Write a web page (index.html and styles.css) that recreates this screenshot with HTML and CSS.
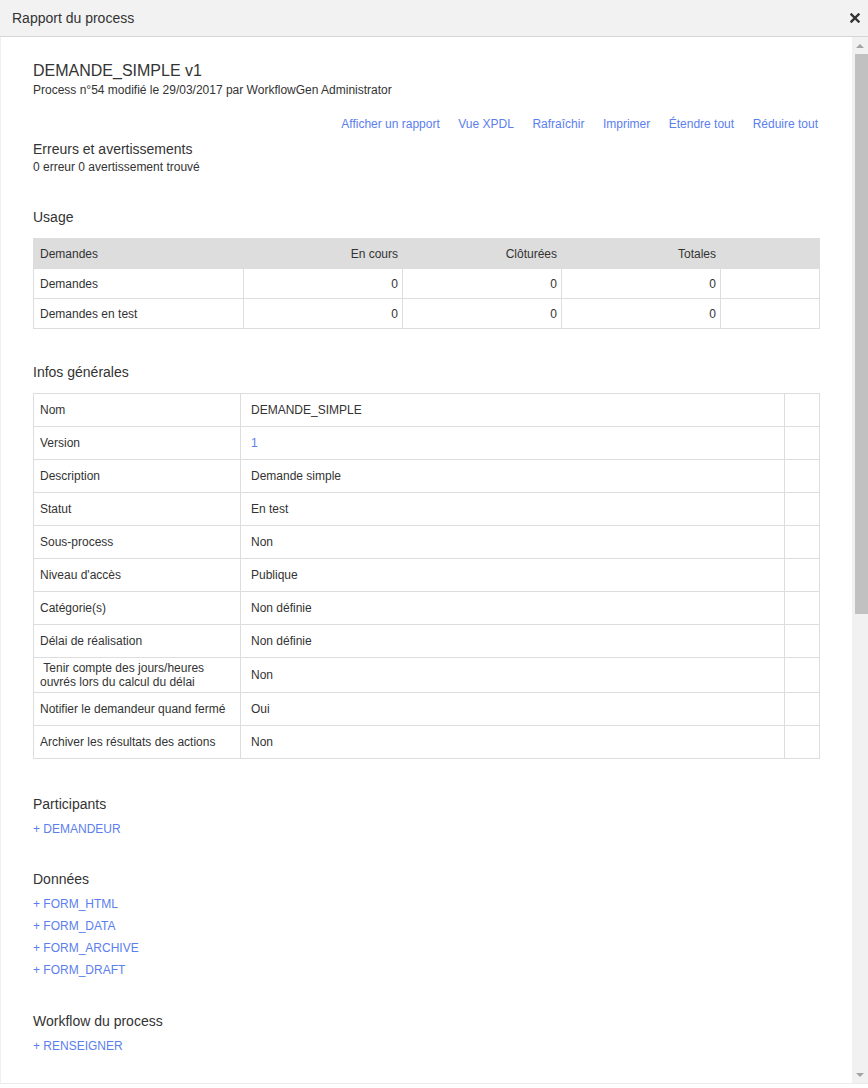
FILE: index.html
```html
<!DOCTYPE html>
<html>
<head>
    <title>Rapport du process</title>
    <link rel="stylesheet" href="styles.css">
</head>
<body>
    <div class="dialog">
        <div class="dialog-header">
            <span class="dialog-title">Rapport du process</span>
            <span class="close">
                <svg width="10" height="10" viewBox="0 0 10 10"><path d="M1.5 1.5 L8.5 8.5 M8.5 1.5 L1.5 8.5" stroke="#333" stroke-width="2.4" stroke-linecap="square"/></svg>
            </span>
        </div>

        <div class="dialog-body">
            <div class="report">
                <h1>DEMANDE_SIMPLE v1</h1>
                <p class="subtitle">Process n°54 modifié le 29/03/2017 par WorkflowGen Administrator</p>

                <div class="actions">
                    <a href="#">Afficher un rapport</a>
                    <a href="#">Vue XPDL</a>
                    <a href="#">Rafraîchir</a>
                    <a href="#">Imprimer</a>
                    <a href="#">Étendre tout</a>
                    <a href="#">Réduire tout</a>
                </div>

                <h2 class="first">Erreurs et avertissements</h2>
                <p class="note">0 erreur 0 avertissement trouvé</p>

                <h2 class="usage-title">Usage</h2>
                <table class="usage">
                    <tr>
                        <th class="c-label">Demandes</th>
                        <th class="num">En cours</th>
                        <th class="num">Clôturées</th>
                        <th class="num">Totales</th>
                        <th class="c-end"></th>
                    </tr>
                    <tr>
                        <td>Demandes</td>
                        <td class="num">0</td>
                        <td class="num">0</td>
                        <td class="num">0</td>
                        <td></td>
                    </tr>
                    <tr>
                        <td>Demandes en test</td>
                        <td class="num">0</td>
                        <td class="num">0</td>
                        <td class="num">0</td>
                        <td></td>
                    </tr>
                </table>

                <h2 class="section">Infos générales</h2>
                <table class="infos">
                    <tr><td class="k">Nom</td><td class="v">DEMANDE_SIMPLE</td><td class="e"></td></tr>
                    <tr><td class="k">Version</td><td class="v"><a href="#">1</a></td><td class="e"></td></tr>
                    <tr><td class="k">Description</td><td class="v">Demande simple</td><td class="e"></td></tr>
                    <tr><td class="k">Statut</td><td class="v">En test</td><td class="e"></td></tr>
                    <tr><td class="k">Sous-process</td><td class="v">Non</td><td class="e"></td></tr>
                    <tr><td class="k">Niveau d'accès</td><td class="v">Publique</td><td class="e"></td></tr>
                    <tr><td class="k">Catégorie(s)</td><td class="v">Non définie</td><td class="e"></td></tr>
                    <tr><td class="k">Délai de réalisation</td><td class="v">Non définie</td><td class="e"></td></tr>
                    <tr><td class="k">&nbsp;Tenir compte des jours/heures<br>ouvrés lors du calcul du délai</td><td class="v">Non</td><td class="e"></td></tr>
                    <tr><td class="k">Notifier le demandeur quand fermé</td><td class="v">Oui</td><td class="e"></td></tr>
                    <tr><td class="k">Archiver les résultats des actions</td><td class="v">Non</td><td class="e"></td></tr>
                </table>

                <h2 class="section participants-title">Participants</h2>
                <ul class="items">
                    <li><a href="#">+ DEMANDEUR</a></li>
                </ul>

                <h2 class="section data-title">Données</h2>
                <ul class="items">
                    <li><a href="#">+ FORM_HTML</a></li>
                    <li><a href="#">+ FORM_DATA</a></li>
                    <li><a href="#">+ FORM_ARCHIVE</a></li>
                    <li><a href="#">+ FORM_DRAFT</a></li>
                </ul>

                <h2 class="section workflow-title">Workflow du process</h2>
                <ul class="items">
                    <li><a href="#">+ RENSEIGNER</a></li>
                </ul>
            </div>

            <div class="scrollbar">
                <span class="arrow up"></span>
                <div class="thumb"></div>
                <div class="track-rest"></div>
                <span class="arrow down"></span>
            </div>
        </div>
    </div>
</body>
</html>
```

FILE: styles.css
```css
body {
    margin: 0;
    padding: 0;
    background-color: #ffffff;
    font-family: "Liberation Sans", Arial, sans-serif;
    color: #333333;
}

a {
    color: #5b80ee;
    text-decoration: none;
}

.dialog {
    width: 868px;
    height: 1088px;
    display: flex;
    flex-direction: column;
}

.dialog-header {
    height: 36px;
    background-color: #f2f2f2;
    border-bottom: 1px solid #d6d6d6;
    display: flex;
    align-items: center;
    justify-content: space-between;
    padding: 0 8px 0 12px;
    flex-shrink: 0;
}

.dialog-title {
    font-size: 14px;
    color: #333333;
}

.close {
    display: flex;
    align-items: center;
}

.dialog-body {
    height: 1046px;
    border-bottom: 1px solid #ebebeb;
    display: flex;
}

.report {
    flex: 1;
    padding: 24px 32px 0 32px;
    border-left: 1px solid #f0f0f0;
}

h1 {
    font-size: 16px;
    font-weight: normal;
    line-height: 20px;
    margin: 0;
    color: #333333;
}

.subtitle {
    font-size: 12px;
    line-height: 18px;
    margin: 0;
}

.actions {
    margin-top: 16px;
    padding-right: 2px;
    display: flex;
    justify-content: flex-end;
    gap: 18.5px;
    font-size: 12px;
    line-height: 18px;
}

h2 {
    font-size: 14px;
    font-weight: normal;
    line-height: 18px;
    margin: 0;
    color: #333333;
}

h2.first {
    margin-top: 7px;
}

.note {
    font-size: 12px;
    line-height: 18px;
    margin: 0;
}

h2.usage-title {
    margin-top: 32px;
}

h2.section {
    margin-top: 34px;
}

h2.participants-title {
    margin-top: 36px;
}

h2.data-title {
    margin-top: 30px;
}

h2.workflow-title {
    margin-top: 31px;
}

table {
    width: 100%;
    border-collapse: collapse;
    margin-top: 12px;
    font-size: 12px;
}

/* usage table */
.usage th {
    background-color: #dddddd;
    font-weight: normal;
    text-align: left;
    height: 29px;
    padding: 0 6px;
    border: 1px solid #dddddd;
}

.usage td {
    height: 29px;
    padding: 0 6px;
    border: 1px solid #dddddd;
}

.usage .num {
    text-align: right;
    padding-right: 4px;
}

.usage .c-label {
    width: 197px;
}

.usage th.num,
.usage td.num {
    width: 148px;
}

/* infos table */
.infos td {
    height: 26px;
    padding: 3px 6px;
    line-height: 14px;
    border: 1px solid #dddddd;
    vertical-align: middle;
}

.infos .k {
    width: 194px;
}

.infos .v {
    padding-left: 10px;
}

.infos .e {
    width: 22px;
}

.items {
    list-style: none;
    margin: 5px 0 0 0;
    padding: 0;
    font-size: 12px;
    line-height: 22px;
}

/* fake scrollbar */
.scrollbar {
    width: 16px;
    background-color: #f1f1f1;
    display: flex;
    flex-direction: column;
    align-items: center;
}

.arrow {
    height: 17px;
    width: 16px;
    display: flex;
    align-items: center;
    justify-content: center;
    flex-shrink: 0;
}

.arrow::after {
    content: "";
    border-left: 4px solid transparent;
    border-right: 4px solid transparent;
}

.arrow.up::after {
    border-bottom: 4px solid #a3a3a3;
}

.arrow.down::after {
    border-top: 4px solid #a3a3a3;
}

.thumb {
    width: 13px;
    margin-left: 2px;
    height: 560px;
    background-color: #c1c1c1;
}

.track-rest {
    flex: 1;
}
```
